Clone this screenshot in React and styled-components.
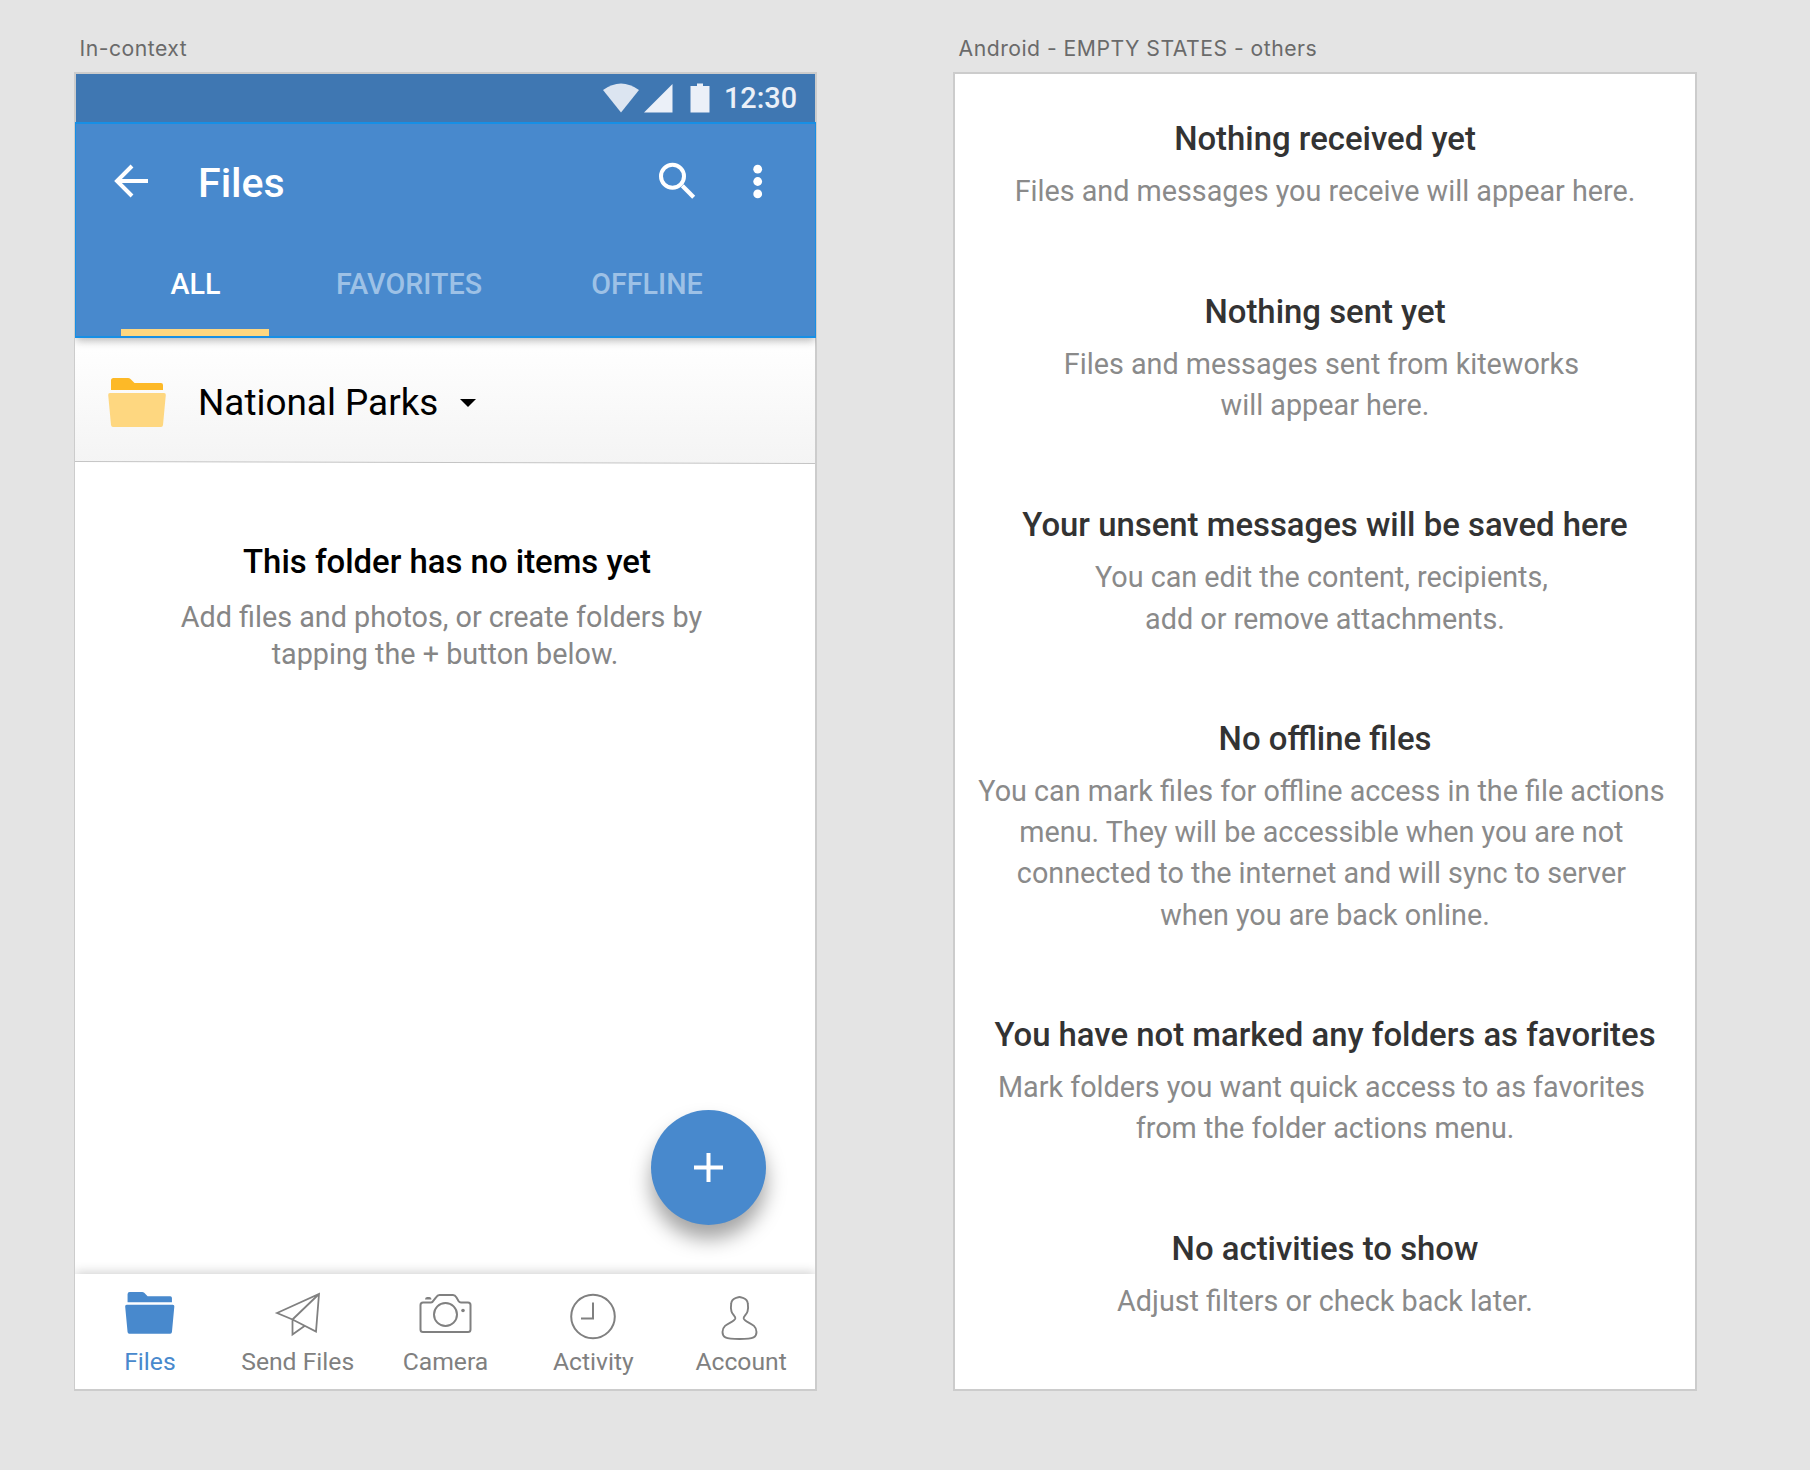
import React from "react";
import styled, { createGlobalStyle } from "styled-components";

const GlobalStyle = createGlobalStyle`
  * { box-sizing: border-box; }
  body { margin: 0; background: #e4e4e4; font-family: Roboto, "Liberation Sans", sans-serif; }
  svg { display: block; flex: none; }
`;

const Canvas = styled.main`
  width: 1810px;
  height: 1470px;
  display: flex;
  gap: 136px;
  padding: 33px 0 0 74px;
`;

const Artboard = styled.section`
  width: 743px;
`;

const ArtboardName = styled.div`
  height: 39px;
  padding-left: 5.6px;
  font: 400 21.2px/30px Inter, sans-serif;
  letter-spacing: 0.48px;
  color: #6a6a6a;
  white-space: nowrap;
`;

const Screen = styled.div`
  width: ${(p) => (p.$flush ? "743px" : "744px")};
  height: 1319px;
  border: 2px solid #cccccc;
  border-left-width: ${(p) => (p.$flush ? "1px" : "2px")};
  background: #fff;
  display: flex;
  flex-direction: column;
`;

const StatusBar = styled.div`
  height: 48px;
  flex: none;
  background: #3f77b2;
  border-left: 1px solid #cccccc;
  display: flex;
  justify-content: flex-end;
  align-items: center;
  padding-right: 18px;
  color: #ebf0f8;
`;

const Clock = styled.span`
  font-size: 28.8px;
  line-height: 48px;
  font-weight: 500;
  margin-left: 14px;
`;

const AppBar = styled.header`
  height: 216px;
  flex: none;
  margin-right: -1px;
  background: #4889cd;
  border: 2px solid #178fe5;
  border-left-width: 1px;
  border-right-width: 1px;
  box-shadow: 0 4px 8px -1px rgba(0, 0, 0, 0.27);
  clip-path: inset(0 0 -16px 0);
  z-index: 1;
  display: flex;
  flex-direction: column;
`;

const Toolbar = styled.div`
  height: 113px;
  display: flex;
  align-items: center;
  padding: 0 52px 0 38px;
`;

const ToolbarTitle = styled.h1`
  margin: 0 auto 0 50px;
  padding-top: 4px;
  font-size: 41.1px;
  line-height: 48px;
  font-weight: 500;
  color: #fff;
`;

const Tabs = styled.nav`
  flex: 1;
  display: flex;
  padding-left: 45px;
`;

const Tab = styled.div`
  width: ${(p) => p.$width}px;
  display: flex;
  justify-content: center;
  padding: 29px 0 0 1px;
  font-size: 28.7px;
  line-height: 36px;
  font-weight: 500;
  color: ${(p) => (p.$active ? "#fff" : "#9dc1e6")};
  border-bottom: 7px solid ${(p) => (p.$active ? "#fed780" : "transparent")};
`;

const FolderBar = styled.div`
  height: 126px;
  flex: none;
  display: flex;
  align-items: center;
  padding: 3px 0 0 33px;
  background: linear-gradient(#ffffff, #f4f4f4);
  position: relative;
`;

const FolderName = styled.span`
  margin: 0 22px 0 32px;
  font-size: 36.9px;
  line-height: 44px;
  color: #000;
`;

const SlantedRule = styled.svg`
  position: absolute;
  left: 0;
  bottom: 0;
`;

const FolderBody = styled.div`
  flex: 1;
  display: flex;
  flex-direction: column;
  padding-top: 77px;
  align-items: center;
`;

const BodyHeading = styled.h2`
  margin: 0 0 16px 4px;
  font-size: 32.9px;
  line-height: 42px;
  font-weight: 500;
  color: #000;
`;

const BodyHint = styled.p`
  margin: 0;
  text-align: center;
  font-size: 28.75px;
  line-height: 37px;
  color: #868686;
  white-space: pre-line;
`;

const FabRow = styled.div`
  margin-top: auto;
  align-self: flex-end;
  padding: 0 49px 49px 0;
`;

const Fab = styled.button`
  width: 115px;
  height: 115px;
  border: 0;
  border-radius: 50%;
  background: #4889cd;
  box-shadow: 0 14px 20px rgba(0, 0, 0, 0.36);
  display: flex;
  align-items: center;
  justify-content: center;
  padding: 0;
`;

const BottomNav = styled.nav`
  height: 115px;
  flex: none;
  display: flex;
  background: #fff;
  padding-left: 1px;
  box-shadow: 0 -2px 10px rgba(0, 0, 0, 0.18);
  clip-path: inset(-16px 0 0 0);
`;

const NavItem = styled.div`
  flex: 1 1 0;
  display: flex;
  flex-direction: column;
  align-items: center;
  color: ${(p) => (p.$active ? "#4889cd" : "#808080")};
  font-size: 24.7px;
  line-height: 30px;
  white-space: nowrap;
`;

const NavIcon = styled.div`
  height: 73px;
  display: flex;
  align-items: flex-start;
  padding-top: ${(p) => p.$top}px;
`;

const StateList = styled.div`
  display: flex;
  flex-direction: column;
  gap: 78.5px;
  padding-top: 44px;
`;

const EmptyState = styled.article`
  text-align: center;
`;

const StateTitle = styled.h2`
  margin: 0 0 11px;
  font-size: 32.9px;
  line-height: 42px;
  font-weight: 500;
  color: #333;
`;

const StateText = styled.p`
  margin: 0 -8px;
  font-size: 28.76px;
  line-height: 41.12px;
  color: #8a8a8a;
  white-space: pre-line;
`;

const FolderIcon = ({ width, tab, front }) => (
  <svg width={width} height={(width * 49) / 58} viewBox="0 0 58 49">
    <path fill={tab} d="M3 12V2.500Q3 0 5.500 0H20Q21.500 0 22.500 1L26.500 5H53Q55 5 55 7V12Z" />
    <path fill={front} d="M2 15H56Q58 15 57.800 17L55 47Q54.800 49 53 49H5Q3.200 49 3 47L.2 17Q0 15 2 15Z" />
  </svg>
);

const navItems = [
  { label: "Files", active: true, top: 18, icon: <FolderIcon width={49.5} tab="#4889cd" front="#4889cd" /> },
  {
    label: "Send Files",
    top: 16,
    icon: (
      <svg width="50" height="50" viewBox="0 0 50 50" fill="none" stroke="#808080" strokeWidth="1.8">
        <path d="M4 24L46 5L43 42.500L19.500 30.500ZM46 5L19.500 30.500V45.500L31.500 37" transform="translate(0 -1)" />
      </svg>
    ),
  },
  {
    label: "Camera",
    top: 17,
    icon: (
      <svg width="53" height="48" viewBox="0 0 53 48" fill="none" stroke="#808080" strokeWidth="2">
        <path d="M4 11.500H12Q13.500 11.500 14.500 9.500L17 6.500Q18.500 4 20.500 4H34Q36 4 37.500 6.500L39.500 10Q40.500 11.500 42 11.500H49Q51.500 11.500 51.500 14V38.500Q51.500 41 49 41H4Q1.500 41 1.500 38.500V14Q1.500 11.500 4 11.500Z" />
        <circle cx="26.500" cy="23.500" r="11.500" />
        <circle cx="44" cy="19.500" r="1.8" fill="#808080" stroke="none" />
        <path d="M6 8.500Q6 6 8 6H10.500Q12.500 6 12.500 8.500Z" fill="#808080" stroke="none" />
      </svg>
    ),
  },
  {
    label: "Activity",
    top: 14,
    icon: (
      <svg width="46" height="54" viewBox="0 0 46 54" fill="none" stroke="#808080" strokeWidth="2">
        <circle cx="23" cy="28.500" r="21.800" />
        <path d="M23 14.500V30.500H11" />
      </svg>
    ),
  },
  {
    label: "Account",
    top: 15.5,
    icon: (
      <svg width="38" height="52" viewBox="1.500 0 38 52" fill="none" stroke="#808080" strokeWidth="1.9" overflow="visible">
        <path d="M19 7C17.500 7 16.500 7.800 15 8.200C12.500 9 11 11 10.700 13.500C10.300 16 10.300 19 11 21.500C11.800 24.500 15.300 26.500 14.800 28.500C13.500 33 2 33 2 42C2 47 4 49 19 49S36 47 36 42C36 33 24.500 33 23.200 28.500C22.700 26.500 26.200 24.500 27 21.500C27.700 19 27.700 16 27.300 13.500C27 11 25.500 9 23 8.200C21.500 7.800 20.500 7 19 7Z" />
      </svg>
    ),
  },
];

const emptyStates = [
  { title: "Nothing received yet", text: "Files and messages you receive will appear here." },
  { title: "Nothing sent yet", text: "Files and messages sent from kiteworks\u00a0\nwill appear here." },
  { title: "Your unsent messages will be saved here", text: "You can edit the content, recipients,\u00a0\nadd or remove attachments." },
  {
    title: "No offline files",
    text: "You can mark files for offline access in the file actions\u00a0\nmenu. They will be accessible when you are not\u00a0\nconnected to the internet and will sync to server\u00a0\nwhen you are back online.",
  },
  {
    title: "You have not marked any folders as favorites",
    text: "Mark folders you want quick access to as favorites\u00a0\nfrom the folder actions menu.",
  },
  { title: "No activities to show", text: "Adjust filters or check back later." },
];

export default function App() {
  return (
    <>
      <GlobalStyle />
      <Canvas>
        <Artboard>
          <ArtboardName>In-context</ArtboardName>
          <Screen $flush>
            <StatusBar>
              <svg width="107" height="30" viewBox="0 0 107 30">
                <path fill="#dce5f1" d="M0 7Q18 -6 36 7L18 29.500Z" />
                <path fill="#ebf0f8" d="M41 29.500L69.500 1V29.500ZM87.500 3H94V.5H100V3H106.500V29.500H87.500Z" />
              </svg>
              <Clock>12:30</Clock>
            </StatusBar>
            <AppBar>
              <Toolbar>
                <svg width="34" height="34" viewBox="0 0 34 34" fill="none" stroke="#fff" strokeWidth="4">
                  <path d="M18 2L3 17L18 32M2 17H34" />
                </svg>
                <ToolbarTitle>Files</ToolbarTitle>
                <svg width="104" height="38" viewBox="0 0 104 38" fill="#fff">
                  <circle cx="13.500" cy="14.200" r="11.500" fill="none" stroke="#fff" strokeWidth="4" />
                  <path d="M21.800 25.200L24.800 22.200L36.200 33.700L33.200 36.700Z" />
                  <circle cx="98.700" cy="7.200" r="4.400" />
                  <circle cx="98.700" cy="19.500" r="4.400" />
                  <circle cx="98.700" cy="31.900" r="4.400" />
                </svg>
              </Toolbar>
              <Tabs>
                <Tab $active $width={148}>ALL</Tab>
                <Tab $width={279}>FAVORITES</Tab>
                <Tab $width={197}>OFFLINE</Tab>
              </Tabs>
            </AppBar>
            <FolderBar>
              <FolderIcon width={58} tab="#fdb927" front="#fed780" />
              <FolderName>National Parks</FolderName>
              <svg width="16" height="8" viewBox="0 0 16 8">
                <path d="M0 0H16L8 8Z" />
              </svg>
              <SlantedRule width="740" height="5" viewBox="0 0 740 5">
                <path d="M0 2.500L740 4.500V5H0Z" fill="#fff" />
                <path d="M0 2.500L740 4.500" stroke="#c4c4c4" strokeWidth="1" />
              </SlantedRule>
            </FolderBar>
            <FolderBody>
              <BodyHeading>This folder has no items yet</BodyHeading>
              <BodyHint>{"Add files and photos, or create folders by\u00a0\ntapping the + button below."}</BodyHint>
              <FabRow>
                <Fab aria-label="Add">
                  <svg width="29" height="29" viewBox="0 0 29 29" stroke="#fff" strokeWidth="4">
                    <path d="M14.500 0V29M0 14.500H29" />
                  </svg>
                </Fab>
              </FabRow>
            </FolderBody>
            <BottomNav>
              {navItems.map((item) => (
                <NavItem key={item.label} $active={item.active}>
                  <NavIcon $top={item.top}>{item.icon}</NavIcon>
                  {item.label}
                </NavItem>
              ))}
            </BottomNav>
          </Screen>
        </Artboard>
        <Artboard>
          <ArtboardName>Android - EMPTY STATES - others</ArtboardName>
          <Screen>
            <StateList>
              {emptyStates.map((s) => (
                <EmptyState key={s.title}>
                  <StateTitle>{s.title}</StateTitle>
                  <StateText>{s.text}</StateText>
                </EmptyState>
              ))}
            </StateList>
          </Screen>
        </Artboard>
      </Canvas>
    </>
  );
}
